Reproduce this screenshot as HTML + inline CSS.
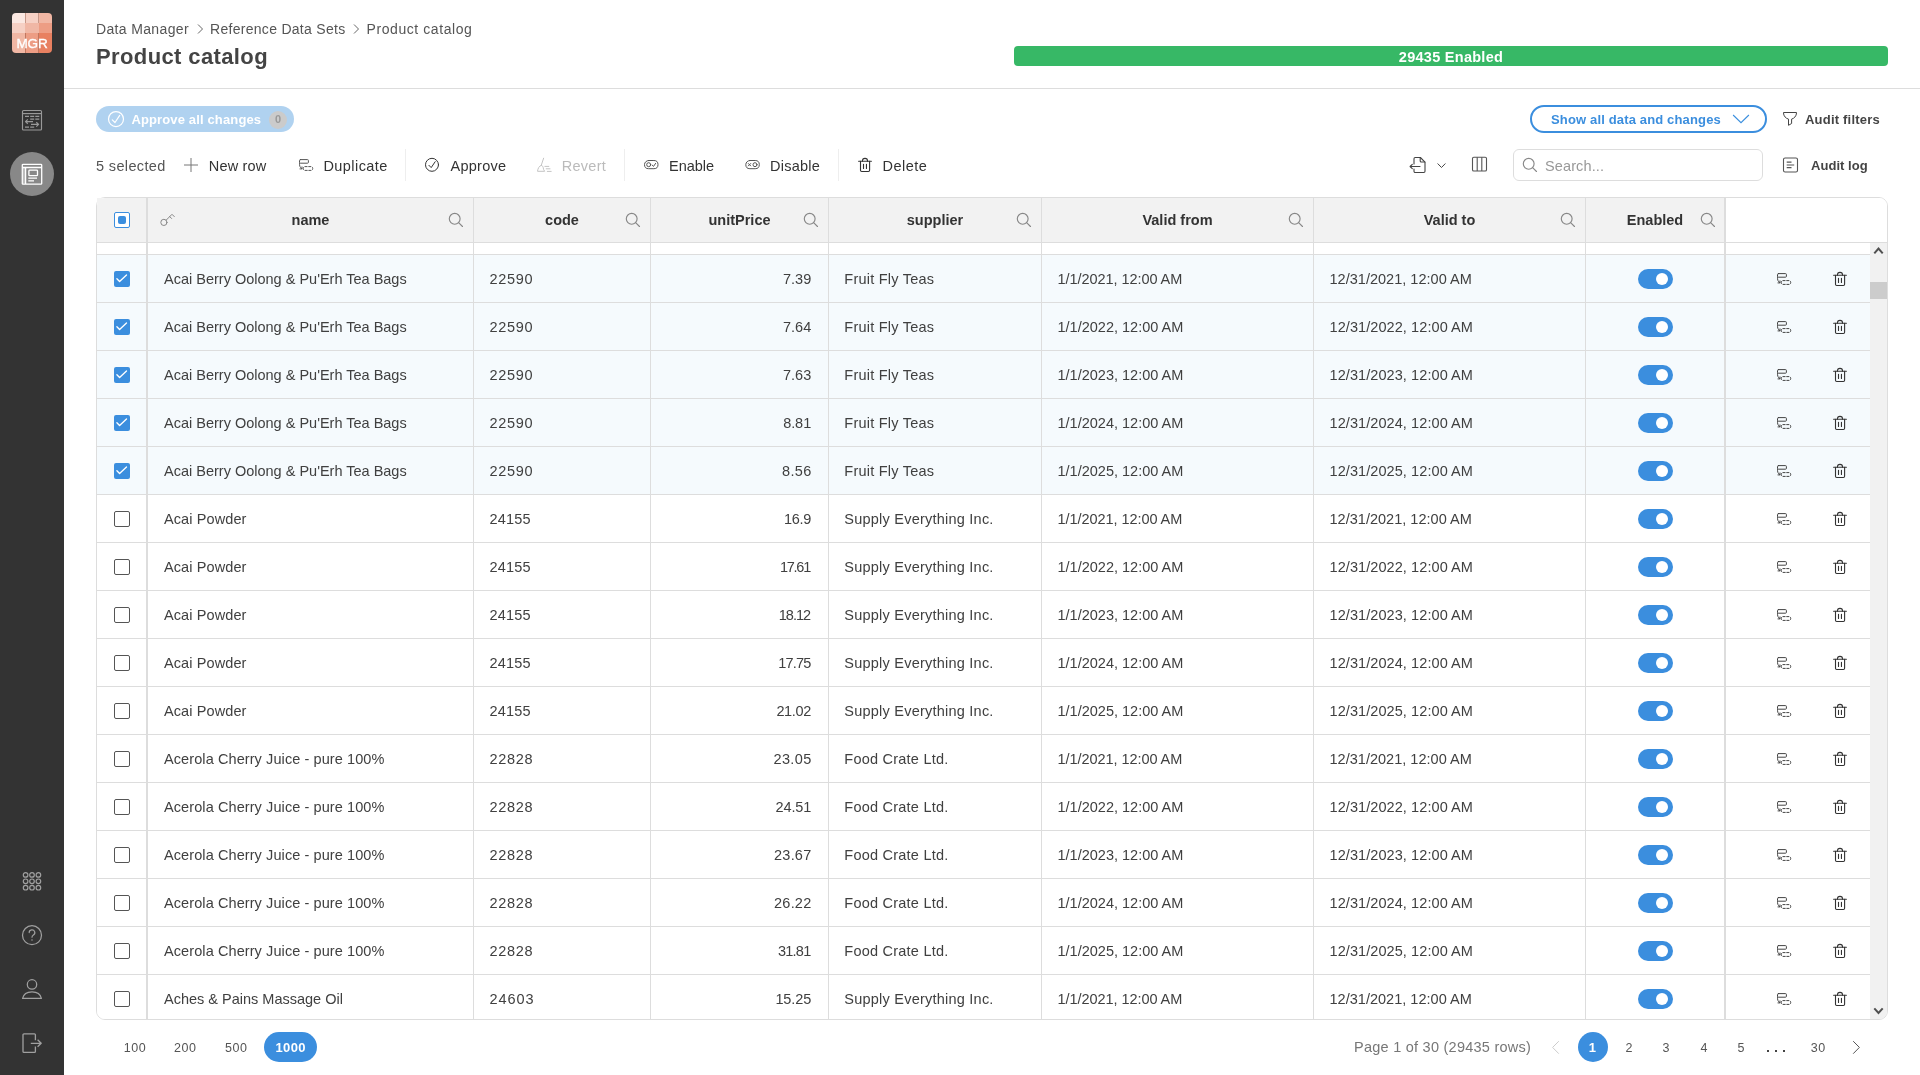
<!DOCTYPE html>
<html lang="en">
<head>
<meta charset="utf-8">
<title>Product catalog</title>
<style>
*{box-sizing:border-box;margin:0;padding:0}
html,body{width:1920px;height:1075px;overflow:hidden;background:#fff}
body{font-family:"Liberation Sans",sans-serif;color:#333;font-size:14px;position:relative}
#wrap{position:absolute;left:0;top:0;width:1920px;height:1075px;will-change:transform}
.abs{position:absolute}
.ic{display:block}
/* sidebar */
#side{position:absolute;left:0;top:0;width:64px;height:1075px;background:#333}
#logo{position:absolute;left:12px;top:13px;width:40px;height:40px;border-radius:4px;overflow:hidden}
#logo i{position:absolute;display:block}
#logo b{position:absolute;left:0;top:22.5px;width:40px;text-align:center;color:#fff;font-weight:400;font-size:13.5px;line-height:16px;letter-spacing:-0.1px;-webkit-text-stroke:.35px #fff}
.sic{position:absolute;left:20px;width:24px;height:24px;color:#aaa}
#act{position:absolute;left:10px;top:152px;width:44px;height:44px;border-radius:50%;background:#888}
/* top */
#crumbs{position:absolute;left:96px;top:19px;height:20px;line-height:20px;font-size:14px;color:#555;white-space:nowrap}
#crumbs span{position:absolute;top:0}
#title{position:absolute;left:96px;top:41px;font-size:22px;font-weight:700;line-height:32px;color:#444;white-space:nowrap;letter-spacing:.38px}
#hr{position:absolute;left:64px;top:88px;width:1856px;height:1px;background:#ddd}
#bar{position:absolute;left:1014px;top:46px;width:874px;height:20px;border-radius:4px;background:#37b866;color:#fff;font-weight:700;font-size:14.5px;line-height:22px;text-align:center;letter-spacing:.27px}
/* approve-all pill */
#appall{position:absolute;left:96px;top:106px;width:198px;height:26px;border-radius:13px;background:#b0d2f0;color:#fff;font-weight:700;font-size:13px;line-height:26px}
#appall .tx{position:absolute;left:35.4px;top:.5px;white-space:nowrap;letter-spacing:.14px}
#appall .bd{position:absolute;left:173px;top:5px;width:18px;height:18px;border-radius:50%;background:#cbcbcb;color:#999;font-size:11px;line-height:17px;text-align:center;font-weight:700}
/* show-all button */
#showall{position:absolute;left:1530px;top:105px;width:237px;height:28px;border:2px solid #3b8ede;border-radius:14px;color:#3b8ede;font-weight:700;font-size:13px;line-height:24px}
#showall .tx{position:absolute;left:19px;top:.5px;white-space:nowrap;letter-spacing:.15px}
.lbl{position:absolute;white-space:nowrap;font-size:14.5px;line-height:20px;color:#333}
.lblb{position:absolute;white-space:nowrap;font-size:13px;line-height:20px;color:#444;font-weight:700}
.vd{position:absolute;top:149px;width:1px;height:32px;background:#eee}
#search{position:absolute;left:1513px;top:149px;width:250px;height:32px;border:1px solid #ddd;border-radius:6px}
#search .ph{position:absolute;left:31px;letter-spacing:.12px;top:6px;font-size:14.5px;line-height:20px;color:#999}
/* table */
#tbl{position:absolute;left:96px;top:197px;width:1792px;height:823px;border:1px solid #ddd;border-radius:9px;overflow:hidden;background:#fff}
#thead{position:absolute;left:0;top:0;width:1790px;height:44px;background:#fff}
.h{position:absolute;top:0;height:44px;background:#f2f2f2;border-right:1px solid #ddd;font-weight:700;font-size:14.5px;line-height:44px;text-align:center;color:#333}
.h .s{position:absolute;right:5px;top:10px;color:#888;line-height:0}
#hline{position:absolute;left:0;top:44px;width:1790px;height:1px;background:#ddd}
#tbody{position:absolute;left:0;top:45px;width:1773px;height:776px;overflow:hidden}
.row{position:absolute;left:0;width:1773px;height:48px;border-top:1px solid #ddd;background:#fff}
.row.sel{background:#f5fafd}
.c{position:absolute;top:0;height:47px;border-right:1px solid #ddd;line-height:47px;font-size:14.5px;color:#404040;white-space:nowrap}
.c .t{position:absolute;left:16px;top:1px}
.c0{left:0;width:51px;border-right:2px solid #ddd}
.c1{left:51px;width:326px}
.c2{left:377px;width:177px}
.c2 .t{letter-spacing:.7px;left:15.5px}
.c3{left:554px;width:178px}
.c3 .t{left:auto;right:16.5px;letter-spacing:.3px}
.c4{left:732px;width:213px}
.c4 .t{letter-spacing:.23px;left:15.3px}
.c6 .t{letter-spacing:.08px}
.c5 .t,.c6 .t{left:15.5px}
.c5{left:945px;width:272px}
.c6{left:1217px;width:272px}
.c7{left:1489px;width:140px;border-right:2px solid #ddd}
.c8{left:1629px;width:144px;border-right:none}
.cb{position:absolute;left:17px;top:16px;width:16px;height:16px;border:1px solid #555;border-radius:2px;background:#fff}
.cb.on{border:none;background:#3b8ede}
.cb.on svg{display:block}
.tg{position:absolute;left:52px;top:14px;width:35px;height:20px;border-radius:10px;background:#3b8ede}
.tg i{position:absolute;left:18px;top:4px;width:12px;height:12px;border-radius:50%;background:#fff}
.a1{position:absolute;left:47.5px;top:13.7px;color:#444}
.a2{position:absolute;left:104.3px;top:13.6px;color:#333}
#sb{position:absolute;left:1773px;top:45px;width:17px;height:776px;background:#f1f1f1}
#sb .th{position:absolute;left:0;top:39px;width:17px;height:17px;background:#ccc}
/* pager */
.pg{position:absolute;top:1038px;letter-spacing:.5px;text-indent:.5px;font-size:12.5px;line-height:20px;color:#555;text-align:center;white-space:nowrap}
#p1000{position:absolute;left:264px;top:1032px;width:53px;height:30px;border-radius:15px;background:#3b8ede;color:#fff;font-weight:700;font-size:13px;line-height:32px;text-align:center;letter-spacing:.4px;text-indent:.4px}
#pc{position:absolute;left:1578px;top:1032px;width:30px;height:30px;border-radius:15px;background:#3b8ede;color:#fff;font-weight:700;font-size:13px;line-height:32px;text-align:center;text-indent:-1.5px}
#pinfo{position:absolute;left:1354px;top:1037px;letter-spacing:.25px;font-size:14.5px;line-height:20px;color:#777;white-space:nowrap}
</style>
</head>
<body>
<div id="wrap">
<!-- SIDEBAR -->
<div id="side">
  <div id="logo">
    <i style="left:0;top:0;width:13.4px;height:10px;background:#fbe8e2"></i><i style="left:13.4px;top:0;width:13.2px;height:10px;background:#f6d0c4"></i><i style="left:26.6px;top:0;width:13.4px;height:10px;background:#f1b7a4"></i>
    <i style="left:0;top:10px;width:13.4px;height:10px;background:#f6d0c4"></i><i style="left:13.4px;top:10px;width:13.2px;height:10px;background:#f0b7a5"></i><i style="left:26.6px;top:10px;width:13.4px;height:10px;background:#ed9d84"></i>
    <i style="left:0;top:20px;width:13.4px;height:20px;background:#f1b7a4"></i><i style="left:13.4px;top:20px;width:13.2px;height:20px;background:#ed9d84"></i><i style="left:26.6px;top:20px;width:13.4px;height:20px;background:#e88060"></i>
    <i style="left:13.1px;top:0;width:.6px;height:10px;background:rgba(110,50,30,.35)"></i><i style="left:26.3px;top:0;width:.6px;height:10px;background:rgba(110,50,30,.35)"></i><i style="left:13.1px;top:20px;width:.6px;height:20px;background:rgba(110,50,30,.35)"></i><i style="left:26.3px;top:20px;width:.6px;height:20px;background:rgba(110,50,30,.35)"></i>
    <b>MGR</b>
  </div>
  
  <svg class="abs" style="left:20px;top:108px" width="24" height="24" viewBox="0 0 24 24" fill="none" stroke="#999" stroke-width="1.15" stroke-linecap="butt" stroke-linejoin="round"><rect x="2.5" y="2.5" width="19" height="19.5" rx="1"/><path d="M2.5 5.6 H21.5"/><path d="M5 8.4H9M10.2 8.4H14.2M15.3 8.4H19.3M10.2 11.1H14.2M15.3 11.1H19.3M5 19.1H9M10.2 19.1H14.2" stroke-width="1.3"/><path d="M13 13.6 H5.6 M7.8 11.4 L5.5 13.6 L7.8 15.8 M11 16.4 H18.5 M16.3 14.2 L18.6 16.4 L16.3 18.6" stroke-width="1.2"/></svg>
  <div id="act"></div>
  <svg class="abs" style="left:20px;top:162px" width="24" height="24" viewBox="0 0 24 24" fill="none" stroke="#fff" stroke-width="1.3" stroke-linejoin="round"><rect x="2.3" y="2.3" width="19.4" height="19.9" rx="0.8"/><rect x="3" y="5.6" width="2.6" height="16" fill="#fff" fill-opacity="0.45" stroke="none"/><path d="M2.3 5.5 H21.7 M5.6 5.5 V22"/><rect x="8.9" y="8.1" width="8.6" height="5.6" rx="0.8"/><path d="M8.3 16.2 H17 M8.3 18.8 H14" stroke-width="1.2"/></svg>
  <svg class="abs" style="left:20px;top:869px" width="24" height="24" viewBox="0 0 24 24" fill="none" stroke="#a0a0a0" stroke-width="1.2"><circle cx="5.6" cy="5.9" r="2.3"/><circle cx="12" cy="5.9" r="2.3"/><circle cx="18.4" cy="5.9" r="2.3"/><circle cx="5.6" cy="12.3" r="2.3"/><circle cx="12" cy="12.3" r="2.3"/><circle cx="18.4" cy="12.3" r="2.3"/><circle cx="5.6" cy="18.7" r="2.3"/><circle cx="12" cy="18.7" r="2.3"/><circle cx="18.4" cy="18.7" r="2.3"/></svg>
  <svg class="abs" style="left:20px;top:923px" width="24" height="24" viewBox="0 0 24 24" fill="none" stroke="#a0a0a0" stroke-width="1.25" stroke-linecap="round"><circle cx="12" cy="12.2" r="9.5"/><path d="M9.2 9.6 a2.8 2.7 0 1 1 4.2 2.3 c-0.9 0.6 -1.4 1.1 -1.4 2.3" stroke-width="1.2"/><circle cx="12" cy="17" r="0.8" fill="#9a9a9a" stroke="none"/></svg>
  <svg class="abs" style="left:20px;top:977px" width="24" height="24" viewBox="0 0 24 24" fill="none" stroke="#a0a0a0" stroke-width="1.25" stroke-linejoin="round"><circle cx="12" cy="7.4" r="4.7"/><path d="M2.6 21.4 C3.4 17.4 7 14.8 12 14.8 S20.6 17.4 21.4 21.4 Z"/></svg>
  <svg class="abs" style="left:20px;top:1031px" width="24" height="24" viewBox="0 0 24 24" fill="none" stroke="#a0a0a0" stroke-width="1.3" stroke-linecap="butt" stroke-linejoin="round"><path d="M15.4 9.2 V3.8 a1 1 0 0 0 -1 -1 H4 a1 1 0 0 0 -1 1 V20.4 a1 1 0 0 0 1 1 H14.4 a1 1 0 0 0 1 -1 V15.4"/><path d="M10.8 12.3 H21 M17.6 8.8 L21.2 12.3 L17.6 15.8"/></svg>

</div>

<!-- TOP -->
<div id="crumbs"><span style="left:0;letter-spacing:.35px">Data Manager</span><span style="left:114px;letter-spacing:.29px">Reference Data Sets</span><span style="left:270.5px;letter-spacing:.58px">Product catalog</span></div>
<svg class="abs" style="left:195px;top:23px" width="10" height="12" viewBox="0 0 10 12" fill="none" stroke="#666" stroke-width="1"><path d="M3 1.5 L7.5 6 L3 10.5"/></svg>
<svg class="abs" style="left:351px;top:23px" width="10" height="12" viewBox="0 0 10 12" fill="none" stroke="#666" stroke-width="1"><path d="M3 1.5 L7.5 6 L3 10.5"/></svg>
<div id="title">Product catalog</div>
<div id="bar">29435 Enabled</div>
<div id="hr"></div>

<!-- ACTION ROW 1 -->
<div id="appall"><svg class="abs" style="left:10px;top:3px" width="20" height="20" viewBox="0 0 20 20" fill="none" stroke="#fff" stroke-width="1.2" stroke-linecap="round" stroke-linejoin="round"><circle cx="10" cy="10.1" r="7.5"/><path d="M6.3 10.8 L9 13.5 L13.7 6.4"/></svg><span class="tx">Approve all changes</span><span class="bd">0</span></div>
<div id="showall"><span class="tx">Show all data and changes</span><svg class="abs" style="left:199px;top:6px" width="20" height="12" viewBox="0 0 20 12" fill="none" stroke="#3b8fde" stroke-width="1.1"><path d="M2.1 2 L10 9.7 L17.9 2"/></svg></div>
<svg class="abs" style="left:1780px;top:109px" width="20" height="20" viewBox="0 0 20 20" fill="none" stroke="#444" stroke-width="1" stroke-linejoin="round"><path d="M3.5 3.5 H16.5 V4 C16.5 7 14 9.6 11.6 10.1 V14.5 L8.5 16.3 V10.1 C6 9.6 3.5 7 3.5 4 Z"/></svg>
<div class="lblb" style="left:1805px;top:109.5px;letter-spacing:.21px">Audit filters</div>

<!-- TOOLBAR -->
<div class="lbl" style="left:96px;top:156px;color:#555;letter-spacing:.36px">5 selected</div>
<div class="lbl" style="left:208.8px;top:156px;letter-spacing:.19px">New row</div>
<div class="lbl" style="left:323.4px;top:156px;letter-spacing:.44px">Duplicate</div>
<div class="vd" style="left:405px"></div>
<div class="lbl" style="left:450.6px;top:156px;letter-spacing:.23px">Approve</div>
<div class="lbl" style="left:561.7px;top:156px;color:#bbb;letter-spacing:.29px">Revert</div>
<div class="vd" style="left:624px"></div>
<div class="lbl" style="left:669px;top:156px">Enable</div>
<div class="lbl" style="left:770px;top:156px;letter-spacing:.25px">Disable</div>
<div class="vd" style="left:838px"></div>
<div class="lbl" style="left:882.6px;top:156px;letter-spacing:.45px">Delete</div>

<svg class="abs" style="left:183px;top:157px" width="16" height="16" viewBox="0 0 16 16" fill="none" stroke="#777" stroke-width="1"><path d="M8 1 V15 M1 8 H15"/></svg>
<svg class="abs" style="left:296px;top:155px;color:#555" width="20" height="20" viewBox="0 0 20 20" fill="none" stroke="currentColor" stroke-width="1" stroke-linecap="round" stroke-linejoin="round"><rect x="3.5" y="4.6" width="8.9" height="3.6" rx="0.9"/><rect x="7.3" y="11.6" width="9.4" height="3.8" rx="1.6" stroke-dasharray="2.2 1.6"/><path d="M3.6 8.2 C3.3 10.6 3.7 12.4 5.9 13.7 M4 13.9 H6 V11.9"/></svg>
<svg class="abs" style="left:422px;top:155px" width="20" height="20" viewBox="0 0 20 20" fill="none" stroke="#333" stroke-width="1" stroke-linecap="round" stroke-linejoin="round"><circle cx="10" cy="9.8" r="6.5"/><path d="M6.9 10.3 L9.2 12.6 L13.2 6.7"/></svg>
<svg class="abs" style="left:534px;top:155px" width="20" height="20" viewBox="0 0 20 20" fill="none" stroke="#c4c4c4" stroke-width="1" stroke-linecap="round" stroke-linejoin="round"><path d="M9.6 3.2 L7.3 10.2 M7.3 10.3 C5 11 3.9 13.4 3.5 16.3 H10.7 C9.8 15.3 9.3 14 9.2 12.6 C9.1 11.6 8.4 10.6 7.4 10.3 M10.9 11.4 H14.8 M12.2 13.8 H16 M13.3 16.4 H17.2"/></svg>
<svg class="abs" style="left:641px;top:155px" width="20" height="20" viewBox="0 0 20 20" fill="none" stroke="#555" stroke-width="1" stroke-linecap="round" stroke-linejoin="round"><rect x="3.5" y="5.5" width="13.5" height="8.2" rx="4.1"/><circle cx="7.7" cy="9.7" r="2"/><path d="M11.3 10.2 L12.5 11.4 L14.6 8.4"/></svg>
<svg class="abs" style="left:742px;top:155px" width="20" height="20" viewBox="0 0 20 20" fill="none" stroke="#555" stroke-width="1" stroke-linecap="round" stroke-linejoin="round"><rect x="3.8" y="5.5" width="13.5" height="8.2" rx="4.1"/><circle cx="13" cy="9.7" r="2"/><path d="M6.3 8.5 L8.7 10.9 M8.7 8.5 L6.3 10.9"/></svg>
<svg class="abs" style="left:855px;top:155px;color:#333" width="20" height="20" viewBox="0 0 20 20" fill="none" stroke="currentColor" stroke-width="1.1" stroke-linecap="round" stroke-linejoin="round"><path d="M3.6 6.2 H16.4"/><path d="M7.4 6.2 C7.4 4.4 8.4 3.4 10 3.4 S12.6 4.4 12.6 6.2"/><path d="M5.5 6.4 V15.3 a1.2 1.2 0 0 0 1.2 1.2 H13.4 a1.2 1.2 0 0 0 1.2 -1.2 V6.4"/><path d="M8.5 9.3 V13.4 M11.45 9.3 V13.4"/></svg>
<svg class="abs" style="left:1406px;top:153px" width="24" height="24" viewBox="0 0 24 24" fill="none" stroke="#444" stroke-width="1.1" stroke-linecap="round" stroke-linejoin="round"><path d="M8 11 V5.7 a1.2 1.2 0 0 1 1.2 -1.2 H14.4 L19 9.1 V18.3 a1.2 1.2 0 0 1 -1.2 1.2 H9.2 a1.2 1.2 0 0 1 -1.2 -1.2 V16"/><path d="M14.2 4.7 V8 a1 1 0 0 0 1 1 H18.8"/><path d="M14 13.5 H4.2 M6.3 11.3 L4.1 13.5 L6.3 15.7"/></svg>
<svg class="abs" style="left:1436px;top:161px" width="11" height="9" viewBox="0 0 11 9" fill="none" stroke="#444" stroke-width="1"><path d="M1.6 2.5 L5.5 6.5 L9.4 2.5"/></svg>
<svg class="abs" style="left:1469px;top:154px" width="20" height="20" viewBox="0 0 20 20" fill="none" stroke="#555" stroke-width="1.1" stroke-linejoin="round"><rect x="3.5" y="3.2" width="14" height="13.8" rx="1.3"/><path d="M8.2 3.2 V17 M12.8 3.2 V17"/></svg>
<svg class="abs" style="left:1780px;top:155px" width="20" height="20" viewBox="0 0 20 20" fill="none" stroke="#555" stroke-width="1.1" stroke-linejoin="round"><rect x="3.5" y="3" width="14" height="14" rx="1.6"/><path d="M6.7 7.2 H11.5 M6.7 10 H14.2 M6.7 12.7 H11.5" stroke-width="1.2"/></svg>

<div id="search"><span class="abs" style="left:3.5px;top:2.7px;color:#888"><svg class="ic" width="24" height="24" viewBox="0 0 24 24" fill="none" stroke="currentColor" stroke-width="1.15" stroke-linecap="round"><circle cx="10.7" cy="10.8" r="5.4"/><path d="M14.6 14.7 L18.5 18.5"/></svg></span><span class="ph">Search...</span></div>
<div class="lblb" style="left:1811px;top:155.5px;letter-spacing:.05px">Audit log</div>

<!-- TABLE -->
<div id="tbl">
  <div id="thead">
    <div class="h" style="left:0;width:51px;border-right:2px solid #ddd"><span class="cb" style="left:17px;top:14px;border:1px solid #3b8ede"><i style="position:absolute;left:3px;top:3px;width:8px;height:8px;border-radius:2px;background:#3b8ede"></i></span></div>
    <div class="h" style="left:51px;width:326px"><span class="hx">name</span><svg class="abs" style="left:9px;top:10px" width="24" height="24" viewBox="0 0 24 24" fill="none" stroke="#888" stroke-width="1" stroke-linecap="round"><circle cx="6.9" cy="14.4" r="3.1"/><path d="M9.2 12.1 L15 6.3 L17.3 8.6 M12.7 8.6 L14.6 10.5"/></svg><span class="s"><svg class="ic" width="24" height="24" viewBox="0 0 24 24" fill="none" stroke="currentColor" stroke-width="1.15" stroke-linecap="round"><circle cx="10.7" cy="10.8" r="5.4"/><path d="M14.6 14.7 L18.5 18.5"/></svg></span></div>
    <div class="h" style="left:377px;width:177px"><span class="hx">code</span><span class="s"><svg class="ic" width="24" height="24" viewBox="0 0 24 24" fill="none" stroke="currentColor" stroke-width="1.15" stroke-linecap="round"><circle cx="10.7" cy="10.8" r="5.4"/><path d="M14.6 14.7 L18.5 18.5"/></svg></span></div>
    <div class="h" style="left:554px;width:178px"><span class="hx">unitPrice</span><span class="s"><svg class="ic" width="24" height="24" viewBox="0 0 24 24" fill="none" stroke="currentColor" stroke-width="1.15" stroke-linecap="round"><circle cx="10.7" cy="10.8" r="5.4"/><path d="M14.6 14.7 L18.5 18.5"/></svg></span></div>
    <div class="h" style="left:732px;width:213px"><span class="hx">supplier</span><span class="s"><svg class="ic" width="24" height="24" viewBox="0 0 24 24" fill="none" stroke="currentColor" stroke-width="1.15" stroke-linecap="round"><circle cx="10.7" cy="10.8" r="5.4"/><path d="M14.6 14.7 L18.5 18.5"/></svg></span></div>
    <div class="h" style="left:945px;width:272px"><span class="hx">Valid from</span><span class="s"><svg class="ic" width="24" height="24" viewBox="0 0 24 24" fill="none" stroke="currentColor" stroke-width="1.15" stroke-linecap="round"><circle cx="10.7" cy="10.8" r="5.4"/><path d="M14.6 14.7 L18.5 18.5"/></svg></span></div>
    <div class="h" style="left:1217px;width:272px"><span class="hx">Valid to</span><span class="s"><svg class="ic" width="24" height="24" viewBox="0 0 24 24" fill="none" stroke="currentColor" stroke-width="1.15" stroke-linecap="round"><circle cx="10.7" cy="10.8" r="5.4"/><path d="M14.6 14.7 L18.5 18.5"/></svg></span></div>
    <div class="h" style="left:1489px;width:140px;border-right:2px solid #ddd"><span class="hx">Enabled</span><span class="s" style="right:4px"><svg class="ic" width="24" height="24" viewBox="0 0 24 24" fill="none" stroke="currentColor" stroke-width="1.15" stroke-linecap="round"><circle cx="10.7" cy="10.8" r="5.4"/><path d="M14.6 14.7 L18.5 18.5"/></svg></span></div>
  </div>
  <div id="hline"></div>
  <div id="tbody">
    <div class="row" style="top:-37px"><div class="c c0"></div><div class="c c1"></div><div class="c c2"></div><div class="c c3"></div><div class="c c4"></div><div class="c c5"></div><div class="c c6"></div><div class="c c7"></div><div class="c c8"></div></div>
<div class="row sel" style="top:11px">
<div class="c c0"><span class="cb on"><svg width="16" height="16" viewBox="0 0 16 16" fill="none" stroke="#fff" stroke-width="1.35" stroke-linecap="round" stroke-linejoin="round"><path d="M2.9 7.7 L5.6 10.5 L12.5 3.9"/></svg></span></div><div class="c c1"><span class="t">Acai Berry Oolong &amp; Pu'Erh Tea Bags</span></div><div class="c c2"><span class="t" style="letter-spacing:0.70px">22590</span></div><div class="c c3"><span class="t" style="letter-spacing:0.00px;right:16.80px">7.39</span></div><div class="c c4"><span class="t">Fruit Fly Teas</span></div><div class="c c5"><span class="t" style="letter-spacing:-0.06px">1/1/2021, 12:00 AM</span></div><div class="c c6"><span class="t" style="letter-spacing:0.02px">12/31/2021, 12:00 AM</span></div><div class="c c7"><span class="tg"><i></i></span></div><div class="c c8"><span class="a1"><svg class="ic" width="20" height="20" viewBox="0 0 20 20" fill="none" stroke="currentColor" stroke-width="1" stroke-linecap="round" stroke-linejoin="round"><rect x="3.5" y="4.6" width="8.9" height="3.6" rx="0.9"/><rect x="7.3" y="11.6" width="9.4" height="3.8" rx="1.6" stroke-dasharray="2.2 1.6"/><path d="M3.6 8.2 C3.3 10.6 3.7 12.4 5.9 13.7 M4 13.9 H6 V11.9"/></svg></span><span class="a2"><svg class="ic" width="20" height="20" viewBox="0 0 20 20" fill="none" stroke="currentColor" stroke-width="1.1" stroke-linecap="round" stroke-linejoin="round"><path d="M3.6 6.2 H16.4"/><path d="M7.4 6.2 C7.4 4.4 8.4 3.4 10 3.4 S12.6 4.4 12.6 6.2"/><path d="M5.5 6.4 V15.3 a1.2 1.2 0 0 0 1.2 1.2 H13.4 a1.2 1.2 0 0 0 1.2 -1.2 V6.4"/><path d="M8.5 9.3 V13.4 M11.45 9.3 V13.4"/></svg></span></div>
</div>
<div class="row sel" style="top:59px">
<div class="c c0"><span class="cb on"><svg width="16" height="16" viewBox="0 0 16 16" fill="none" stroke="#fff" stroke-width="1.35" stroke-linecap="round" stroke-linejoin="round"><path d="M2.9 7.7 L5.6 10.5 L12.5 3.9"/></svg></span></div><div class="c c1"><span class="t">Acai Berry Oolong &amp; Pu'Erh Tea Bags</span></div><div class="c c2"><span class="t" style="letter-spacing:0.70px">22590</span></div><div class="c c3"><span class="t" style="letter-spacing:0.00px;right:16.80px">7.64</span></div><div class="c c4"><span class="t">Fruit Fly Teas</span></div><div class="c c5"><span class="t">1/1/2022, 12:00 AM</span></div><div class="c c6"><span class="t">12/31/2022, 12:00 AM</span></div><div class="c c7"><span class="tg"><i></i></span></div><div class="c c8"><span class="a1"><svg class="ic" width="20" height="20" viewBox="0 0 20 20" fill="none" stroke="currentColor" stroke-width="1" stroke-linecap="round" stroke-linejoin="round"><rect x="3.5" y="4.6" width="8.9" height="3.6" rx="0.9"/><rect x="7.3" y="11.6" width="9.4" height="3.8" rx="1.6" stroke-dasharray="2.2 1.6"/><path d="M3.6 8.2 C3.3 10.6 3.7 12.4 5.9 13.7 M4 13.9 H6 V11.9"/></svg></span><span class="a2"><svg class="ic" width="20" height="20" viewBox="0 0 20 20" fill="none" stroke="currentColor" stroke-width="1.1" stroke-linecap="round" stroke-linejoin="round"><path d="M3.6 6.2 H16.4"/><path d="M7.4 6.2 C7.4 4.4 8.4 3.4 10 3.4 S12.6 4.4 12.6 6.2"/><path d="M5.5 6.4 V15.3 a1.2 1.2 0 0 0 1.2 1.2 H13.4 a1.2 1.2 0 0 0 1.2 -1.2 V6.4"/><path d="M8.5 9.3 V13.4 M11.45 9.3 V13.4"/></svg></span></div>
</div>
<div class="row sel" style="top:107px">
<div class="c c0"><span class="cb on"><svg width="16" height="16" viewBox="0 0 16 16" fill="none" stroke="#fff" stroke-width="1.35" stroke-linecap="round" stroke-linejoin="round"><path d="M2.9 7.7 L5.6 10.5 L12.5 3.9"/></svg></span></div><div class="c c1"><span class="t">Acai Berry Oolong &amp; Pu'Erh Tea Bags</span></div><div class="c c2"><span class="t" style="letter-spacing:0.70px">22590</span></div><div class="c c3"><span class="t" style="letter-spacing:0.00px;right:16.80px">7.63</span></div><div class="c c4"><span class="t">Fruit Fly Teas</span></div><div class="c c5"><span class="t">1/1/2023, 12:00 AM</span></div><div class="c c6"><span class="t">12/31/2023, 12:00 AM</span></div><div class="c c7"><span class="tg"><i></i></span></div><div class="c c8"><span class="a1"><svg class="ic" width="20" height="20" viewBox="0 0 20 20" fill="none" stroke="currentColor" stroke-width="1" stroke-linecap="round" stroke-linejoin="round"><rect x="3.5" y="4.6" width="8.9" height="3.6" rx="0.9"/><rect x="7.3" y="11.6" width="9.4" height="3.8" rx="1.6" stroke-dasharray="2.2 1.6"/><path d="M3.6 8.2 C3.3 10.6 3.7 12.4 5.9 13.7 M4 13.9 H6 V11.9"/></svg></span><span class="a2"><svg class="ic" width="20" height="20" viewBox="0 0 20 20" fill="none" stroke="currentColor" stroke-width="1.1" stroke-linecap="round" stroke-linejoin="round"><path d="M3.6 6.2 H16.4"/><path d="M7.4 6.2 C7.4 4.4 8.4 3.4 10 3.4 S12.6 4.4 12.6 6.2"/><path d="M5.5 6.4 V15.3 a1.2 1.2 0 0 0 1.2 1.2 H13.4 a1.2 1.2 0 0 0 1.2 -1.2 V6.4"/><path d="M8.5 9.3 V13.4 M11.45 9.3 V13.4"/></svg></span></div>
</div>
<div class="row sel" style="top:155px">
<div class="c c0"><span class="cb on"><svg width="16" height="16" viewBox="0 0 16 16" fill="none" stroke="#fff" stroke-width="1.35" stroke-linecap="round" stroke-linejoin="round"><path d="M2.9 7.7 L5.6 10.5 L12.5 3.9"/></svg></span></div><div class="c c1"><span class="t">Acai Berry Oolong &amp; Pu'Erh Tea Bags</span></div><div class="c c2"><span class="t" style="letter-spacing:0.70px">22590</span></div><div class="c c3"><span class="t" style="letter-spacing:-0.05px;right:16.85px">8.81</span></div><div class="c c4"><span class="t">Fruit Fly Teas</span></div><div class="c c5"><span class="t">1/1/2024, 12:00 AM</span></div><div class="c c6"><span class="t">12/31/2024, 12:00 AM</span></div><div class="c c7"><span class="tg"><i></i></span></div><div class="c c8"><span class="a1"><svg class="ic" width="20" height="20" viewBox="0 0 20 20" fill="none" stroke="currentColor" stroke-width="1" stroke-linecap="round" stroke-linejoin="round"><rect x="3.5" y="4.6" width="8.9" height="3.6" rx="0.9"/><rect x="7.3" y="11.6" width="9.4" height="3.8" rx="1.6" stroke-dasharray="2.2 1.6"/><path d="M3.6 8.2 C3.3 10.6 3.7 12.4 5.9 13.7 M4 13.9 H6 V11.9"/></svg></span><span class="a2"><svg class="ic" width="20" height="20" viewBox="0 0 20 20" fill="none" stroke="currentColor" stroke-width="1.1" stroke-linecap="round" stroke-linejoin="round"><path d="M3.6 6.2 H16.4"/><path d="M7.4 6.2 C7.4 4.4 8.4 3.4 10 3.4 S12.6 4.4 12.6 6.2"/><path d="M5.5 6.4 V15.3 a1.2 1.2 0 0 0 1.2 1.2 H13.4 a1.2 1.2 0 0 0 1.2 -1.2 V6.4"/><path d="M8.5 9.3 V13.4 M11.45 9.3 V13.4"/></svg></span></div>
</div>
<div class="row sel" style="top:203px">
<div class="c c0"><span class="cb on"><svg width="16" height="16" viewBox="0 0 16 16" fill="none" stroke="#fff" stroke-width="1.35" stroke-linecap="round" stroke-linejoin="round"><path d="M2.9 7.7 L5.6 10.5 L12.5 3.9"/></svg></span></div><div class="c c1"><span class="t">Acai Berry Oolong &amp; Pu'Erh Tea Bags</span></div><div class="c c2"><span class="t" style="letter-spacing:0.70px">22590</span></div><div class="c c3"><span class="t" style="letter-spacing:0.30px;right:16.50px">8.56</span></div><div class="c c4"><span class="t">Fruit Fly Teas</span></div><div class="c c5"><span class="t">1/1/2025, 12:00 AM</span></div><div class="c c6"><span class="t">12/31/2025, 12:00 AM</span></div><div class="c c7"><span class="tg"><i></i></span></div><div class="c c8"><span class="a1"><svg class="ic" width="20" height="20" viewBox="0 0 20 20" fill="none" stroke="currentColor" stroke-width="1" stroke-linecap="round" stroke-linejoin="round"><rect x="3.5" y="4.6" width="8.9" height="3.6" rx="0.9"/><rect x="7.3" y="11.6" width="9.4" height="3.8" rx="1.6" stroke-dasharray="2.2 1.6"/><path d="M3.6 8.2 C3.3 10.6 3.7 12.4 5.9 13.7 M4 13.9 H6 V11.9"/></svg></span><span class="a2"><svg class="ic" width="20" height="20" viewBox="0 0 20 20" fill="none" stroke="currentColor" stroke-width="1.1" stroke-linecap="round" stroke-linejoin="round"><path d="M3.6 6.2 H16.4"/><path d="M7.4 6.2 C7.4 4.4 8.4 3.4 10 3.4 S12.6 4.4 12.6 6.2"/><path d="M5.5 6.4 V15.3 a1.2 1.2 0 0 0 1.2 1.2 H13.4 a1.2 1.2 0 0 0 1.2 -1.2 V6.4"/><path d="M8.5 9.3 V13.4 M11.45 9.3 V13.4"/></svg></span></div>
</div>
<div class="row" style="top:251px">
<div class="c c0"><span class="cb"></span></div><div class="c c1"><span class="t" style="letter-spacing:.1px">Acai Powder</span></div><div class="c c2"><span class="t" style="letter-spacing:0.18px">24155</span></div><div class="c c3"><span class="t" style="letter-spacing:-0.30px;right:17.10px">16.9</span></div><div class="c c4"><span class="t">Supply Everything Inc.</span></div><div class="c c5"><span class="t" style="letter-spacing:-0.06px">1/1/2021, 12:00 AM</span></div><div class="c c6"><span class="t" style="letter-spacing:0.02px">12/31/2021, 12:00 AM</span></div><div class="c c7"><span class="tg"><i></i></span></div><div class="c c8"><span class="a1"><svg class="ic" width="20" height="20" viewBox="0 0 20 20" fill="none" stroke="currentColor" stroke-width="1" stroke-linecap="round" stroke-linejoin="round"><rect x="3.5" y="4.6" width="8.9" height="3.6" rx="0.9"/><rect x="7.3" y="11.6" width="9.4" height="3.8" rx="1.6" stroke-dasharray="2.2 1.6"/><path d="M3.6 8.2 C3.3 10.6 3.7 12.4 5.9 13.7 M4 13.9 H6 V11.9"/></svg></span><span class="a2"><svg class="ic" width="20" height="20" viewBox="0 0 20 20" fill="none" stroke="currentColor" stroke-width="1.1" stroke-linecap="round" stroke-linejoin="round"><path d="M3.6 6.2 H16.4"/><path d="M7.4 6.2 C7.4 4.4 8.4 3.4 10 3.4 S12.6 4.4 12.6 6.2"/><path d="M5.5 6.4 V15.3 a1.2 1.2 0 0 0 1.2 1.2 H13.4 a1.2 1.2 0 0 0 1.2 -1.2 V6.4"/><path d="M8.5 9.3 V13.4 M11.45 9.3 V13.4"/></svg></span></div>
</div>
<div class="row" style="top:299px">
<div class="c c0"><span class="cb"></span></div><div class="c c1"><span class="t" style="letter-spacing:.1px">Acai Powder</span></div><div class="c c2"><span class="t" style="letter-spacing:0.18px">24155</span></div><div class="c c3"><span class="t" style="letter-spacing:-1.25px;right:18.05px">17.61</span></div><div class="c c4"><span class="t">Supply Everything Inc.</span></div><div class="c c5"><span class="t">1/1/2022, 12:00 AM</span></div><div class="c c6"><span class="t">12/31/2022, 12:00 AM</span></div><div class="c c7"><span class="tg"><i></i></span></div><div class="c c8"><span class="a1"><svg class="ic" width="20" height="20" viewBox="0 0 20 20" fill="none" stroke="currentColor" stroke-width="1" stroke-linecap="round" stroke-linejoin="round"><rect x="3.5" y="4.6" width="8.9" height="3.6" rx="0.9"/><rect x="7.3" y="11.6" width="9.4" height="3.8" rx="1.6" stroke-dasharray="2.2 1.6"/><path d="M3.6 8.2 C3.3 10.6 3.7 12.4 5.9 13.7 M4 13.9 H6 V11.9"/></svg></span><span class="a2"><svg class="ic" width="20" height="20" viewBox="0 0 20 20" fill="none" stroke="currentColor" stroke-width="1.1" stroke-linecap="round" stroke-linejoin="round"><path d="M3.6 6.2 H16.4"/><path d="M7.4 6.2 C7.4 4.4 8.4 3.4 10 3.4 S12.6 4.4 12.6 6.2"/><path d="M5.5 6.4 V15.3 a1.2 1.2 0 0 0 1.2 1.2 H13.4 a1.2 1.2 0 0 0 1.2 -1.2 V6.4"/><path d="M8.5 9.3 V13.4 M11.45 9.3 V13.4"/></svg></span></div>
</div>
<div class="row" style="top:347px">
<div class="c c0"><span class="cb"></span></div><div class="c c1"><span class="t" style="letter-spacing:.1px">Acai Powder</span></div><div class="c c2"><span class="t" style="letter-spacing:0.18px">24155</span></div><div class="c c3"><span class="t" style="letter-spacing:-0.95px;right:17.75px">18.12</span></div><div class="c c4"><span class="t">Supply Everything Inc.</span></div><div class="c c5"><span class="t">1/1/2023, 12:00 AM</span></div><div class="c c6"><span class="t">12/31/2023, 12:00 AM</span></div><div class="c c7"><span class="tg"><i></i></span></div><div class="c c8"><span class="a1"><svg class="ic" width="20" height="20" viewBox="0 0 20 20" fill="none" stroke="currentColor" stroke-width="1" stroke-linecap="round" stroke-linejoin="round"><rect x="3.5" y="4.6" width="8.9" height="3.6" rx="0.9"/><rect x="7.3" y="11.6" width="9.4" height="3.8" rx="1.6" stroke-dasharray="2.2 1.6"/><path d="M3.6 8.2 C3.3 10.6 3.7 12.4 5.9 13.7 M4 13.9 H6 V11.9"/></svg></span><span class="a2"><svg class="ic" width="20" height="20" viewBox="0 0 20 20" fill="none" stroke="currentColor" stroke-width="1.1" stroke-linecap="round" stroke-linejoin="round"><path d="M3.6 6.2 H16.4"/><path d="M7.4 6.2 C7.4 4.4 8.4 3.4 10 3.4 S12.6 4.4 12.6 6.2"/><path d="M5.5 6.4 V15.3 a1.2 1.2 0 0 0 1.2 1.2 H13.4 a1.2 1.2 0 0 0 1.2 -1.2 V6.4"/><path d="M8.5 9.3 V13.4 M11.45 9.3 V13.4"/></svg></span></div>
</div>
<div class="row" style="top:395px">
<div class="c c0"><span class="cb"></span></div><div class="c c1"><span class="t" style="letter-spacing:.1px">Acai Powder</span></div><div class="c c2"><span class="t" style="letter-spacing:0.18px">24155</span></div><div class="c c3"><span class="t" style="letter-spacing:-0.82px;right:17.62px">17.75</span></div><div class="c c4"><span class="t">Supply Everything Inc.</span></div><div class="c c5"><span class="t">1/1/2024, 12:00 AM</span></div><div class="c c6"><span class="t">12/31/2024, 12:00 AM</span></div><div class="c c7"><span class="tg"><i></i></span></div><div class="c c8"><span class="a1"><svg class="ic" width="20" height="20" viewBox="0 0 20 20" fill="none" stroke="currentColor" stroke-width="1" stroke-linecap="round" stroke-linejoin="round"><rect x="3.5" y="4.6" width="8.9" height="3.6" rx="0.9"/><rect x="7.3" y="11.6" width="9.4" height="3.8" rx="1.6" stroke-dasharray="2.2 1.6"/><path d="M3.6 8.2 C3.3 10.6 3.7 12.4 5.9 13.7 M4 13.9 H6 V11.9"/></svg></span><span class="a2"><svg class="ic" width="20" height="20" viewBox="0 0 20 20" fill="none" stroke="currentColor" stroke-width="1.1" stroke-linecap="round" stroke-linejoin="round"><path d="M3.6 6.2 H16.4"/><path d="M7.4 6.2 C7.4 4.4 8.4 3.4 10 3.4 S12.6 4.4 12.6 6.2"/><path d="M5.5 6.4 V15.3 a1.2 1.2 0 0 0 1.2 1.2 H13.4 a1.2 1.2 0 0 0 1.2 -1.2 V6.4"/><path d="M8.5 9.3 V13.4 M11.45 9.3 V13.4"/></svg></span></div>
</div>
<div class="row" style="top:443px">
<div class="c c0"><span class="cb"></span></div><div class="c c1"><span class="t" style="letter-spacing:.1px">Acai Powder</span></div><div class="c c2"><span class="t" style="letter-spacing:0.18px">24155</span></div><div class="c c3"><span class="t" style="letter-spacing:-0.37px;right:17.17px">21.02</span></div><div class="c c4"><span class="t">Supply Everything Inc.</span></div><div class="c c5"><span class="t">1/1/2025, 12:00 AM</span></div><div class="c c6"><span class="t">12/31/2025, 12:00 AM</span></div><div class="c c7"><span class="tg"><i></i></span></div><div class="c c8"><span class="a1"><svg class="ic" width="20" height="20" viewBox="0 0 20 20" fill="none" stroke="currentColor" stroke-width="1" stroke-linecap="round" stroke-linejoin="round"><rect x="3.5" y="4.6" width="8.9" height="3.6" rx="0.9"/><rect x="7.3" y="11.6" width="9.4" height="3.8" rx="1.6" stroke-dasharray="2.2 1.6"/><path d="M3.6 8.2 C3.3 10.6 3.7 12.4 5.9 13.7 M4 13.9 H6 V11.9"/></svg></span><span class="a2"><svg class="ic" width="20" height="20" viewBox="0 0 20 20" fill="none" stroke="currentColor" stroke-width="1.1" stroke-linecap="round" stroke-linejoin="round"><path d="M3.6 6.2 H16.4"/><path d="M7.4 6.2 C7.4 4.4 8.4 3.4 10 3.4 S12.6 4.4 12.6 6.2"/><path d="M5.5 6.4 V15.3 a1.2 1.2 0 0 0 1.2 1.2 H13.4 a1.2 1.2 0 0 0 1.2 -1.2 V6.4"/><path d="M8.5 9.3 V13.4 M11.45 9.3 V13.4"/></svg></span></div>
</div>
<div class="row" style="top:491px">
<div class="c c0"><span class="cb"></span></div><div class="c c1"><span class="t" style="letter-spacing:.09px">Acerola Cherry Juice - pure 100%</span></div><div class="c c2"><span class="t" style="letter-spacing:0.67px">22828</span></div><div class="c c3"><span class="t" style="letter-spacing:0.35px;right:16.45px">23.05</span></div><div class="c c4"><span class="t">Food Crate Ltd.</span></div><div class="c c5"><span class="t" style="letter-spacing:-0.06px">1/1/2021, 12:00 AM</span></div><div class="c c6"><span class="t" style="letter-spacing:0.02px">12/31/2021, 12:00 AM</span></div><div class="c c7"><span class="tg"><i></i></span></div><div class="c c8"><span class="a1"><svg class="ic" width="20" height="20" viewBox="0 0 20 20" fill="none" stroke="currentColor" stroke-width="1" stroke-linecap="round" stroke-linejoin="round"><rect x="3.5" y="4.6" width="8.9" height="3.6" rx="0.9"/><rect x="7.3" y="11.6" width="9.4" height="3.8" rx="1.6" stroke-dasharray="2.2 1.6"/><path d="M3.6 8.2 C3.3 10.6 3.7 12.4 5.9 13.7 M4 13.9 H6 V11.9"/></svg></span><span class="a2"><svg class="ic" width="20" height="20" viewBox="0 0 20 20" fill="none" stroke="currentColor" stroke-width="1.1" stroke-linecap="round" stroke-linejoin="round"><path d="M3.6 6.2 H16.4"/><path d="M7.4 6.2 C7.4 4.4 8.4 3.4 10 3.4 S12.6 4.4 12.6 6.2"/><path d="M5.5 6.4 V15.3 a1.2 1.2 0 0 0 1.2 1.2 H13.4 a1.2 1.2 0 0 0 1.2 -1.2 V6.4"/><path d="M8.5 9.3 V13.4 M11.45 9.3 V13.4"/></svg></span></div>
</div>
<div class="row" style="top:539px">
<div class="c c0"><span class="cb"></span></div><div class="c c1"><span class="t" style="letter-spacing:.09px">Acerola Cherry Juice - pure 100%</span></div><div class="c c2"><span class="t" style="letter-spacing:0.67px">22828</span></div><div class="c c3"><span class="t" style="letter-spacing:-0.17px;right:16.97px">24.51</span></div><div class="c c4"><span class="t">Food Crate Ltd.</span></div><div class="c c5"><span class="t">1/1/2022, 12:00 AM</span></div><div class="c c6"><span class="t">12/31/2022, 12:00 AM</span></div><div class="c c7"><span class="tg"><i></i></span></div><div class="c c8"><span class="a1"><svg class="ic" width="20" height="20" viewBox="0 0 20 20" fill="none" stroke="currentColor" stroke-width="1" stroke-linecap="round" stroke-linejoin="round"><rect x="3.5" y="4.6" width="8.9" height="3.6" rx="0.9"/><rect x="7.3" y="11.6" width="9.4" height="3.8" rx="1.6" stroke-dasharray="2.2 1.6"/><path d="M3.6 8.2 C3.3 10.6 3.7 12.4 5.9 13.7 M4 13.9 H6 V11.9"/></svg></span><span class="a2"><svg class="ic" width="20" height="20" viewBox="0 0 20 20" fill="none" stroke="currentColor" stroke-width="1.1" stroke-linecap="round" stroke-linejoin="round"><path d="M3.6 6.2 H16.4"/><path d="M7.4 6.2 C7.4 4.4 8.4 3.4 10 3.4 S12.6 4.4 12.6 6.2"/><path d="M5.5 6.4 V15.3 a1.2 1.2 0 0 0 1.2 1.2 H13.4 a1.2 1.2 0 0 0 1.2 -1.2 V6.4"/><path d="M8.5 9.3 V13.4 M11.45 9.3 V13.4"/></svg></span></div>
</div>
<div class="row" style="top:587px">
<div class="c c0"><span class="cb"></span></div><div class="c c1"><span class="t" style="letter-spacing:.09px">Acerola Cherry Juice - pure 100%</span></div><div class="c c2"><span class="t" style="letter-spacing:0.67px">22828</span></div><div class="c c3"><span class="t" style="letter-spacing:0.20px;right:16.60px">23.67</span></div><div class="c c4"><span class="t">Food Crate Ltd.</span></div><div class="c c5"><span class="t">1/1/2023, 12:00 AM</span></div><div class="c c6"><span class="t">12/31/2023, 12:00 AM</span></div><div class="c c7"><span class="tg"><i></i></span></div><div class="c c8"><span class="a1"><svg class="ic" width="20" height="20" viewBox="0 0 20 20" fill="none" stroke="currentColor" stroke-width="1" stroke-linecap="round" stroke-linejoin="round"><rect x="3.5" y="4.6" width="8.9" height="3.6" rx="0.9"/><rect x="7.3" y="11.6" width="9.4" height="3.8" rx="1.6" stroke-dasharray="2.2 1.6"/><path d="M3.6 8.2 C3.3 10.6 3.7 12.4 5.9 13.7 M4 13.9 H6 V11.9"/></svg></span><span class="a2"><svg class="ic" width="20" height="20" viewBox="0 0 20 20" fill="none" stroke="currentColor" stroke-width="1.1" stroke-linecap="round" stroke-linejoin="round"><path d="M3.6 6.2 H16.4"/><path d="M7.4 6.2 C7.4 4.4 8.4 3.4 10 3.4 S12.6 4.4 12.6 6.2"/><path d="M5.5 6.4 V15.3 a1.2 1.2 0 0 0 1.2 1.2 H13.4 a1.2 1.2 0 0 0 1.2 -1.2 V6.4"/><path d="M8.5 9.3 V13.4 M11.45 9.3 V13.4"/></svg></span></div>
</div>
<div class="row" style="top:635px">
<div class="c c0"><span class="cb"></span></div><div class="c c1"><span class="t" style="letter-spacing:.09px">Acerola Cherry Juice - pure 100%</span></div><div class="c c2"><span class="t" style="letter-spacing:0.67px">22828</span></div><div class="c c3"><span class="t" style="letter-spacing:0.20px;right:16.60px">26.22</span></div><div class="c c4"><span class="t">Food Crate Ltd.</span></div><div class="c c5"><span class="t">1/1/2024, 12:00 AM</span></div><div class="c c6"><span class="t">12/31/2024, 12:00 AM</span></div><div class="c c7"><span class="tg"><i></i></span></div><div class="c c8"><span class="a1"><svg class="ic" width="20" height="20" viewBox="0 0 20 20" fill="none" stroke="currentColor" stroke-width="1" stroke-linecap="round" stroke-linejoin="round"><rect x="3.5" y="4.6" width="8.9" height="3.6" rx="0.9"/><rect x="7.3" y="11.6" width="9.4" height="3.8" rx="1.6" stroke-dasharray="2.2 1.6"/><path d="M3.6 8.2 C3.3 10.6 3.7 12.4 5.9 13.7 M4 13.9 H6 V11.9"/></svg></span><span class="a2"><svg class="ic" width="20" height="20" viewBox="0 0 20 20" fill="none" stroke="currentColor" stroke-width="1.1" stroke-linecap="round" stroke-linejoin="round"><path d="M3.6 6.2 H16.4"/><path d="M7.4 6.2 C7.4 4.4 8.4 3.4 10 3.4 S12.6 4.4 12.6 6.2"/><path d="M5.5 6.4 V15.3 a1.2 1.2 0 0 0 1.2 1.2 H13.4 a1.2 1.2 0 0 0 1.2 -1.2 V6.4"/><path d="M8.5 9.3 V13.4 M11.45 9.3 V13.4"/></svg></span></div>
</div>
<div class="row" style="top:683px">
<div class="c c0"><span class="cb"></span></div><div class="c c1"><span class="t" style="letter-spacing:.09px">Acerola Cherry Juice - pure 100%</span></div><div class="c c2"><span class="t" style="letter-spacing:0.67px">22828</span></div><div class="c c3"><span class="t" style="letter-spacing:-0.78px;right:17.58px">31.81</span></div><div class="c c4"><span class="t">Food Crate Ltd.</span></div><div class="c c5"><span class="t">1/1/2025, 12:00 AM</span></div><div class="c c6"><span class="t">12/31/2025, 12:00 AM</span></div><div class="c c7"><span class="tg"><i></i></span></div><div class="c c8"><span class="a1"><svg class="ic" width="20" height="20" viewBox="0 0 20 20" fill="none" stroke="currentColor" stroke-width="1" stroke-linecap="round" stroke-linejoin="round"><rect x="3.5" y="4.6" width="8.9" height="3.6" rx="0.9"/><rect x="7.3" y="11.6" width="9.4" height="3.8" rx="1.6" stroke-dasharray="2.2 1.6"/><path d="M3.6 8.2 C3.3 10.6 3.7 12.4 5.9 13.7 M4 13.9 H6 V11.9"/></svg></span><span class="a2"><svg class="ic" width="20" height="20" viewBox="0 0 20 20" fill="none" stroke="currentColor" stroke-width="1.1" stroke-linecap="round" stroke-linejoin="round"><path d="M3.6 6.2 H16.4"/><path d="M7.4 6.2 C7.4 4.4 8.4 3.4 10 3.4 S12.6 4.4 12.6 6.2"/><path d="M5.5 6.4 V15.3 a1.2 1.2 0 0 0 1.2 1.2 H13.4 a1.2 1.2 0 0 0 1.2 -1.2 V6.4"/><path d="M8.5 9.3 V13.4 M11.45 9.3 V13.4"/></svg></span></div>
</div>
<div class="row" style="top:731px">
<div class="c c0"><span class="cb"></span></div><div class="c c1"><span class="t">Aches &amp; Pains Massage Oil</span></div><div class="c c2"><span class="t" style="letter-spacing:0.95px">24603</span></div><div class="c c3"><span class="t" style="letter-spacing:-0.12px;right:16.92px">15.25</span></div><div class="c c4"><span class="t">Supply Everything Inc.</span></div><div class="c c5"><span class="t" style="letter-spacing:-0.06px">1/1/2021, 12:00 AM</span></div><div class="c c6"><span class="t" style="letter-spacing:0.02px">12/31/2021, 12:00 AM</span></div><div class="c c7"><span class="tg"><i></i></span></div><div class="c c8"><span class="a1"><svg class="ic" width="20" height="20" viewBox="0 0 20 20" fill="none" stroke="currentColor" stroke-width="1" stroke-linecap="round" stroke-linejoin="round"><rect x="3.5" y="4.6" width="8.9" height="3.6" rx="0.9"/><rect x="7.3" y="11.6" width="9.4" height="3.8" rx="1.6" stroke-dasharray="2.2 1.6"/><path d="M3.6 8.2 C3.3 10.6 3.7 12.4 5.9 13.7 M4 13.9 H6 V11.9"/></svg></span><span class="a2"><svg class="ic" width="20" height="20" viewBox="0 0 20 20" fill="none" stroke="currentColor" stroke-width="1.1" stroke-linecap="round" stroke-linejoin="round"><path d="M3.6 6.2 H16.4"/><path d="M7.4 6.2 C7.4 4.4 8.4 3.4 10 3.4 S12.6 4.4 12.6 6.2"/><path d="M5.5 6.4 V15.3 a1.2 1.2 0 0 0 1.2 1.2 H13.4 a1.2 1.2 0 0 0 1.2 -1.2 V6.4"/><path d="M8.5 9.3 V13.4 M11.45 9.3 V13.4"/></svg></span></div>
</div>
  </div>
  <div id="sb"><div class="th"></div><svg class="abs" style="left:0;top:0" width="17" height="17" viewBox="0 0 17 17" fill="none" stroke="#505050" stroke-width="2"><path d="M4.3 10.3 L8.5 5.6 L12.7 10.3"/></svg><svg class="abs" style="left:0;top:758px" width="17" height="17" viewBox="0 0 17 17" fill="none" stroke="#505050" stroke-width="2"><path d="M4.3 7.3 L8.5 12 L12.7 7.3"/></svg></div>
</div>

<div class="abs" style="left:97px;top:198px;width:5px;height:5px;background:#f2f2f2"></div>
<!-- PAGER -->
<div class="pg" style="left:114.7px;width:40px">100</div>
<div class="pg" style="left:165px;width:40px">200</div>
<div class="pg" style="left:216px;width:40px">500</div>
<div id="p1000">1000</div>
<div id="pinfo">Page 1 of 30 (29435 rows)</div>
<div id="pc">1</div>
<div class="pg" style="left:1609px;width:40px">2</div>
<div class="pg" style="left:1646px;width:40px">3</div>
<div class="pg" style="left:1684px;width:40px">4</div>
<div class="pg" style="left:1721px;width:40px">5</div>
<div class="abs" style="left:1767.3px;top:1050.3px;width:1.8px;height:1.8px;background:#444"></div><div class="abs" style="left:1775.4px;top:1050.3px;width:1.8px;height:1.8px;background:#444"></div><div class="abs" style="left:1783px;top:1050.3px;width:1.8px;height:1.8px;background:#444"></div>
<div class="pg" style="left:1798px;width:40px">30</div>
<svg class="abs" style="left:1548px;top:1039px" width="16" height="16" viewBox="0 0 16 16" fill="none" stroke="#ccc" stroke-width="1"><path d="M10.8 2.2 L4.6 8.4 L10.8 14.7"/></svg><svg class="abs" style="left:1848px;top:1039px" width="16" height="16" viewBox="0 0 16 16" fill="none" stroke="#555" stroke-width="1"><path d="M5.2 2.2 L11.4 8.4 L5.2 14.7"/></svg>
</div>
</body>
</html>
